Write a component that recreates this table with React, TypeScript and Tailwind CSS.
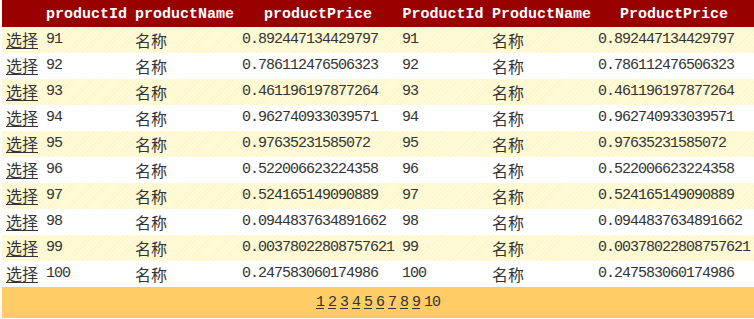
const rows = [
  { id: 91, price: "0.892447134429797" },
  { id: 92, price: "0.786112476506323" },
  { id: 93, price: "0.461196197877264" },
  { id: 94, price: "0.962740933039571" },
  { id: 95, price: "0.97635231585072" },
  { id: 96, price: "0.522006623224358" },
  { id: 97, price: "0.524165149090889" },
  { id: 98, price: "0.0944837634891662" },
  { id: 99, price: "0.00378022808757621" },
  { id: 100, price: "0.247583060174986" },
];

const mono = "font-['Liberation_Mono','DejaVu_Sans_Mono',monospace] text-[15px] tracking-[-1px] leading-[18px]";
const cjk = "font-['Noto_Sans_CJK_SC',sans-serif] text-[16px] leading-[18px]";

export default function App() {
  return (
    <div className="w-[754px] h-[319px] overflow-hidden bg-white text-[#333333]">
      <table className="ml-[2px] w-[752px] table-fixed border-collapse">
        <thead>
          <tr className="h-[27px] bg-[#990000] text-white">
            <th className="w-[40px] px-1" />
            {["productId", "productName", "productPrice", "ProductId", "ProductName", "ProductPrice"].map((h, i) => (
              <th
                key={h}
                className={`px-1 pt-[3px] text-center font-['Liberation_Mono','DejaVu_Sans_Mono',monospace] text-[15px] font-bold whitespace-nowrap ${
                  ["w-[89px]", "w-[107px]", "w-[160px]", "w-[90px]", "w-[106px]", "w-[160px]"][i]
                }`}
              >
                {h}
              </th>
            ))}
          </tr>
        </thead>
        <tbody>
          {rows.map((r, i) => (
            <tr
              key={r.id}
              className={`h-[26px] ${
                i % 2 === 0
                  ? "bg-[repeating-linear-gradient(135deg,#fffbd6_0px,#fffbd6_2px,#fcf5cd_2px,#fcf5cd_3px)]"
                  : "bg-white"
              }`}
            >
              <td className="px-1">
                <a href="#" className={`${cjk} underline underline-offset-2`}>
                  选择
                </a>
              </td>
              <td className={`px-1 ${mono}`}>{r.id}</td>
              <td className={`px-1 ${cjk}`}>名称</td>
              <td className={`px-1 ${mono} whitespace-nowrap`}>{r.price}</td>
              <td className={`px-1 ${mono}`}>{r.id}</td>
              <td className={`px-1 ${cjk}`}>名称</td>
              <td className={`px-1 ${mono} whitespace-nowrap`}>{r.price}</td>
            </tr>
          ))}
          <tr className="h-[31px] bg-[#ffcc66]">
            <td colSpan={7} className="px-1">
              <div className={`flex justify-center gap-1 ${mono}`}>
                {[1, 2, 3, 4, 5, 6, 7, 8, 9].map((n) => (
                  <a key={n} href="#" className="underline underline-offset-2">
                    {n}
                  </a>
                ))}
                <span>10</span>
              </div>
            </td>
          </tr>
        </tbody>
      </table>
    </div>
  );
}
